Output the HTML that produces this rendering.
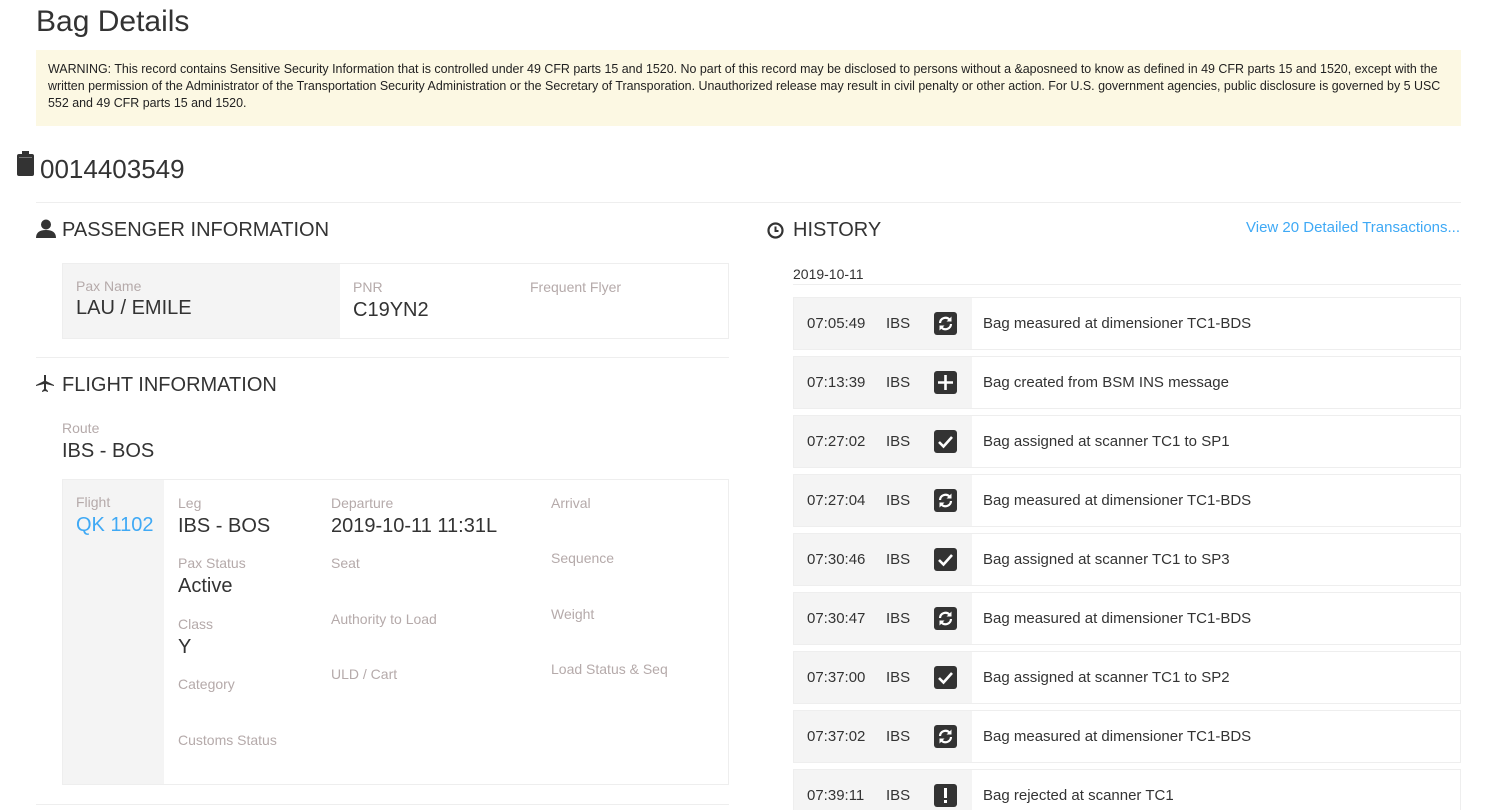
<!DOCTYPE html>
<html><head><meta charset="utf-8"><style>
*{box-sizing:border-box;margin:0;padding:0}
html,body{width:1494px;height:810px;overflow:hidden}
body{background:#fff;font-family:"Liberation Sans",sans-serif;color:#333;position:relative}
.a{position:absolute}
.lbl{position:absolute;font-size:14px;color:#b5aaaa}
.val{position:absolute;font-size:20px;color:#333}
h2{position:absolute;font-weight:normal;font-size:20px;color:#333}
.row{position:absolute;left:793px;width:668px;height:53px;border:1px solid #eee;background:#fff}
.row .g{position:absolute;left:0;top:0;width:178px;height:51px;background:#f4f4f4}
.row span{position:absolute;top:17px;font-size:15px;color:#333}
.ic{position:absolute;left:140px;top:14px;width:23px;height:23px;background:#333;border-radius:3px}
</style></head><body>
<div class="a" style="left:36px;top:5px;font-size:30px;color:#333">Bag Details</div>
<div class="a" style="left:36px;top:50px;width:1425px;height:76px;background:#fcf8e3;padding:11px 12px;font-size:12.45px;line-height:17px;color:#222;white-space:nowrap">WARNING: This record contains Sensitive Security Information that is controlled under 49 CFR parts 15 and 1520. No part of this record may be disclosed to persons without a &amp;aposneed to know as defined in 49 CFR parts 15 and 1520, except with the<br>written permission of the Administrator of the Transportation Security Administration or the Secretary of Transporation. Unauthorized release may result in civil penalty or other action. For U.S. government agencies, public disclosure is governed by 5 USC<br>552 and 49 CFR parts 15 and 1520.</div>
<svg class="a" style="left:17px;top:151px" width="17" height="25" viewBox="0 0 17 25"><rect x="5" y="0" width="7" height="3" fill="#333"/><rect x="0" y="3" width="17" height="22" rx="2" fill="#333"/><rect x="2" y="6" width="13" height="1" fill="#777"/></svg>
<div class="a" style="left:40px;top:154px;font-size:26px;color:#333">0014403549</div>
<div class="a" style="left:36px;top:202px;width:1425px;height:1px;background:#eee"></div>
<svg class="a" style="left:36px;top:219px" width="20" height="19" viewBox="0 0 20 19"><circle cx="10" cy="5.5" r="5" fill="#333"/><path d="M0 19 Q0 11 10 11 Q20 11 20 19Z" fill="#333"/></svg>
<h2 style="left:62px;top:219px">PASSENGER INFORMATION</h2>
<div class="a" style="left:62px;top:263px;width:667px;height:76px;border:1px solid #eee"></div>
<div class="a" style="left:63px;top:264px;width:277px;height:74px;background:#f4f4f4"></div>
<div class="lbl" style="left:76px;top:278px">Pax Name</div><div class="val" style="left:76px;top:297px">LAU / EMILE</div>
<div class="lbl" style="left:353px;top:279px">PNR</div><div class="val" style="left:353px;top:299px">C19YN2</div>
<div class="lbl" style="left:530px;top:279px">Frequent Flyer</div>
<div class="a" style="left:36px;top:357px;width:693px;height:1px;background:#eee"></div>
<svg class="a" style="left:36px;top:375px" width="18" height="18" viewBox="0 0 18 18"><path d="M9 0 L10 0 L10 6 L18 10 L18 11 L10 9 L10 14 L12 16 L12 17 L9 16 L6 17 L6 16 L8 14 L8 9 L0 11 L0 10 L8 6 L8 0Z" fill="#333"/></svg>
<h2 style="left:62px;top:374px">FLIGHT INFORMATION</h2>
<div class="lbl" style="left:62px;top:420px">Route</div><div class="val" style="left:62px;top:440px">IBS - BOS</div>
<div class="a" style="left:62px;top:479px;width:667px;height:306px;border:1px solid #eee"></div>
<div class="a" style="left:63px;top:480px;width:101px;height:304px;background:#f4f4f4"></div>
<div class="lbl" style="left:76px;top:494px">Flight</div><div class="val" style="left:76px;top:514px;color:#3fa9f5">QK 1102</div>
<div class="lbl" style="left:178px;top:495px">Leg</div><div class="val" style="left:178px;top:515px">IBS - BOS</div>
<div class="lbl" style="left:178px;top:555px">Pax Status</div><div class="val" style="left:178px;top:575px">Active</div>
<div class="lbl" style="left:178px;top:616px">Class</div><div class="val" style="left:178px;top:636px">Y</div>
<div class="lbl" style="left:178px;top:676px">Category</div>
<div class="lbl" style="left:178px;top:732px">Customs Status</div>
<div class="lbl" style="left:331px;top:495px">Departure</div><div class="val" style="left:331px;top:515px">2019-10-11 11:31L</div>
<div class="lbl" style="left:331px;top:555px">Seat</div>
<div class="lbl" style="left:331px;top:611px">Authority to Load</div>
<div class="lbl" style="left:331px;top:666px">ULD / Cart</div>
<div class="lbl" style="left:551px;top:495px">Arrival</div>
<div class="lbl" style="left:551px;top:550px">Sequence</div>
<div class="lbl" style="left:551px;top:606px">Weight</div>
<div class="lbl" style="left:551px;top:661px">Load Status &amp; Seq</div>
<div class="a" style="left:36px;top:804px;width:693px;height:1px;background:#eee"></div>
<svg class="a" style="left:767px;top:222px" width="17" height="17" viewBox="0 0 17 17"><circle cx="8.5" cy="8.5" r="7" fill="none" stroke="#333" stroke-width="2.2"/><path d="M8.5 4.5V9H11.5" fill="none" stroke="#333" stroke-width="2"/></svg>
<h2 style="left:793px;top:219px">HISTORY</h2>
<div class="a" style="left:1246px;top:219px;font-size:15px;color:#3fa9f5">View 20 Detailed Transactions...</div>
<div class="a" style="left:793px;top:266px;font-size:14px;color:#333">2019-10-11</div>
<div class="a" style="left:793px;top:284px;width:668px;height:1px;background:#eee"></div>
<div class="row" style="top:297px"><div class="g"></div><span style="left:13px">07:05:49</span><span style="left:92px">IBS</span><div class="ic"><svg width="23" height="23" viewBox="0 0 23 23"><path d="M6 11a5.5 5.5 0 0 1 9.5-3.5M17 12a5.5 5.5 0 0 1-9.5 3.5" fill="none" stroke="#fff" stroke-width="2.2"/><path d="M17.5 4.5v5h-5zM5.5 18.5v-5h5z" fill="#fff"/></svg></div><span style="left:189px">Bag measured at dimensioner TC1-BDS</span></div>
<div class="row" style="top:356px"><div class="g"></div><span style="left:13px">07:13:39</span><span style="left:92px">IBS</span><div class="ic"><svg width="23" height="23"><path d="M11.5 4v15M4 11.5h15" stroke="#fff" stroke-width="2.6"/></svg></div><span style="left:189px">Bag created from BSM INS message</span></div>
<div class="row" style="top:415px"><div class="g"></div><span style="left:13px">07:27:02</span><span style="left:92px">IBS</span><div class="ic"><svg width="23" height="23"><path d="M5 12l4.5 4.5L18 7" fill="none" stroke="#fff" stroke-width="2.6"/></svg></div><span style="left:189px">Bag assigned at scanner TC1 to SP1</span></div>
<div class="row" style="top:474px"><div class="g"></div><span style="left:13px">07:27:04</span><span style="left:92px">IBS</span><div class="ic"><svg width="23" height="23" viewBox="0 0 23 23"><path d="M6 11a5.5 5.5 0 0 1 9.5-3.5M17 12a5.5 5.5 0 0 1-9.5 3.5" fill="none" stroke="#fff" stroke-width="2.2"/><path d="M17.5 4.5v5h-5zM5.5 18.5v-5h5z" fill="#fff"/></svg></div><span style="left:189px">Bag measured at dimensioner TC1-BDS</span></div>
<div class="row" style="top:533px"><div class="g"></div><span style="left:13px">07:30:46</span><span style="left:92px">IBS</span><div class="ic"><svg width="23" height="23"><path d="M5 12l4.5 4.5L18 7" fill="none" stroke="#fff" stroke-width="2.6"/></svg></div><span style="left:189px">Bag assigned at scanner TC1 to SP3</span></div>
<div class="row" style="top:592px"><div class="g"></div><span style="left:13px">07:30:47</span><span style="left:92px">IBS</span><div class="ic"><svg width="23" height="23" viewBox="0 0 23 23"><path d="M6 11a5.5 5.5 0 0 1 9.5-3.5M17 12a5.5 5.5 0 0 1-9.5 3.5" fill="none" stroke="#fff" stroke-width="2.2"/><path d="M17.5 4.5v5h-5zM5.5 18.5v-5h5z" fill="#fff"/></svg></div><span style="left:189px">Bag measured at dimensioner TC1-BDS</span></div>
<div class="row" style="top:651px"><div class="g"></div><span style="left:13px">07:37:00</span><span style="left:92px">IBS</span><div class="ic"><svg width="23" height="23"><path d="M5 12l4.5 4.5L18 7" fill="none" stroke="#fff" stroke-width="2.6"/></svg></div><span style="left:189px">Bag assigned at scanner TC1 to SP2</span></div>
<div class="row" style="top:710px"><div class="g"></div><span style="left:13px">07:37:02</span><span style="left:92px">IBS</span><div class="ic"><svg width="23" height="23" viewBox="0 0 23 23"><path d="M6 11a5.5 5.5 0 0 1 9.5-3.5M17 12a5.5 5.5 0 0 1-9.5 3.5" fill="none" stroke="#fff" stroke-width="2.2"/><path d="M17.5 4.5v5h-5zM5.5 18.5v-5h5z" fill="#fff"/></svg></div><span style="left:189px">Bag measured at dimensioner TC1-BDS</span></div>
<div class="row" style="top:769px"><div class="g"></div><span style="left:13px">07:39:11</span><span style="left:92px">IBS</span><div class="ic"><svg width="23" height="23"><path d="M11.5 4v10" stroke="#fff" stroke-width="3"/><rect x="10" y="16" width="3" height="3" fill="#fff"/></svg></div><span style="left:189px">Bag rejected at scanner TC1</span></div>
</body></html>
